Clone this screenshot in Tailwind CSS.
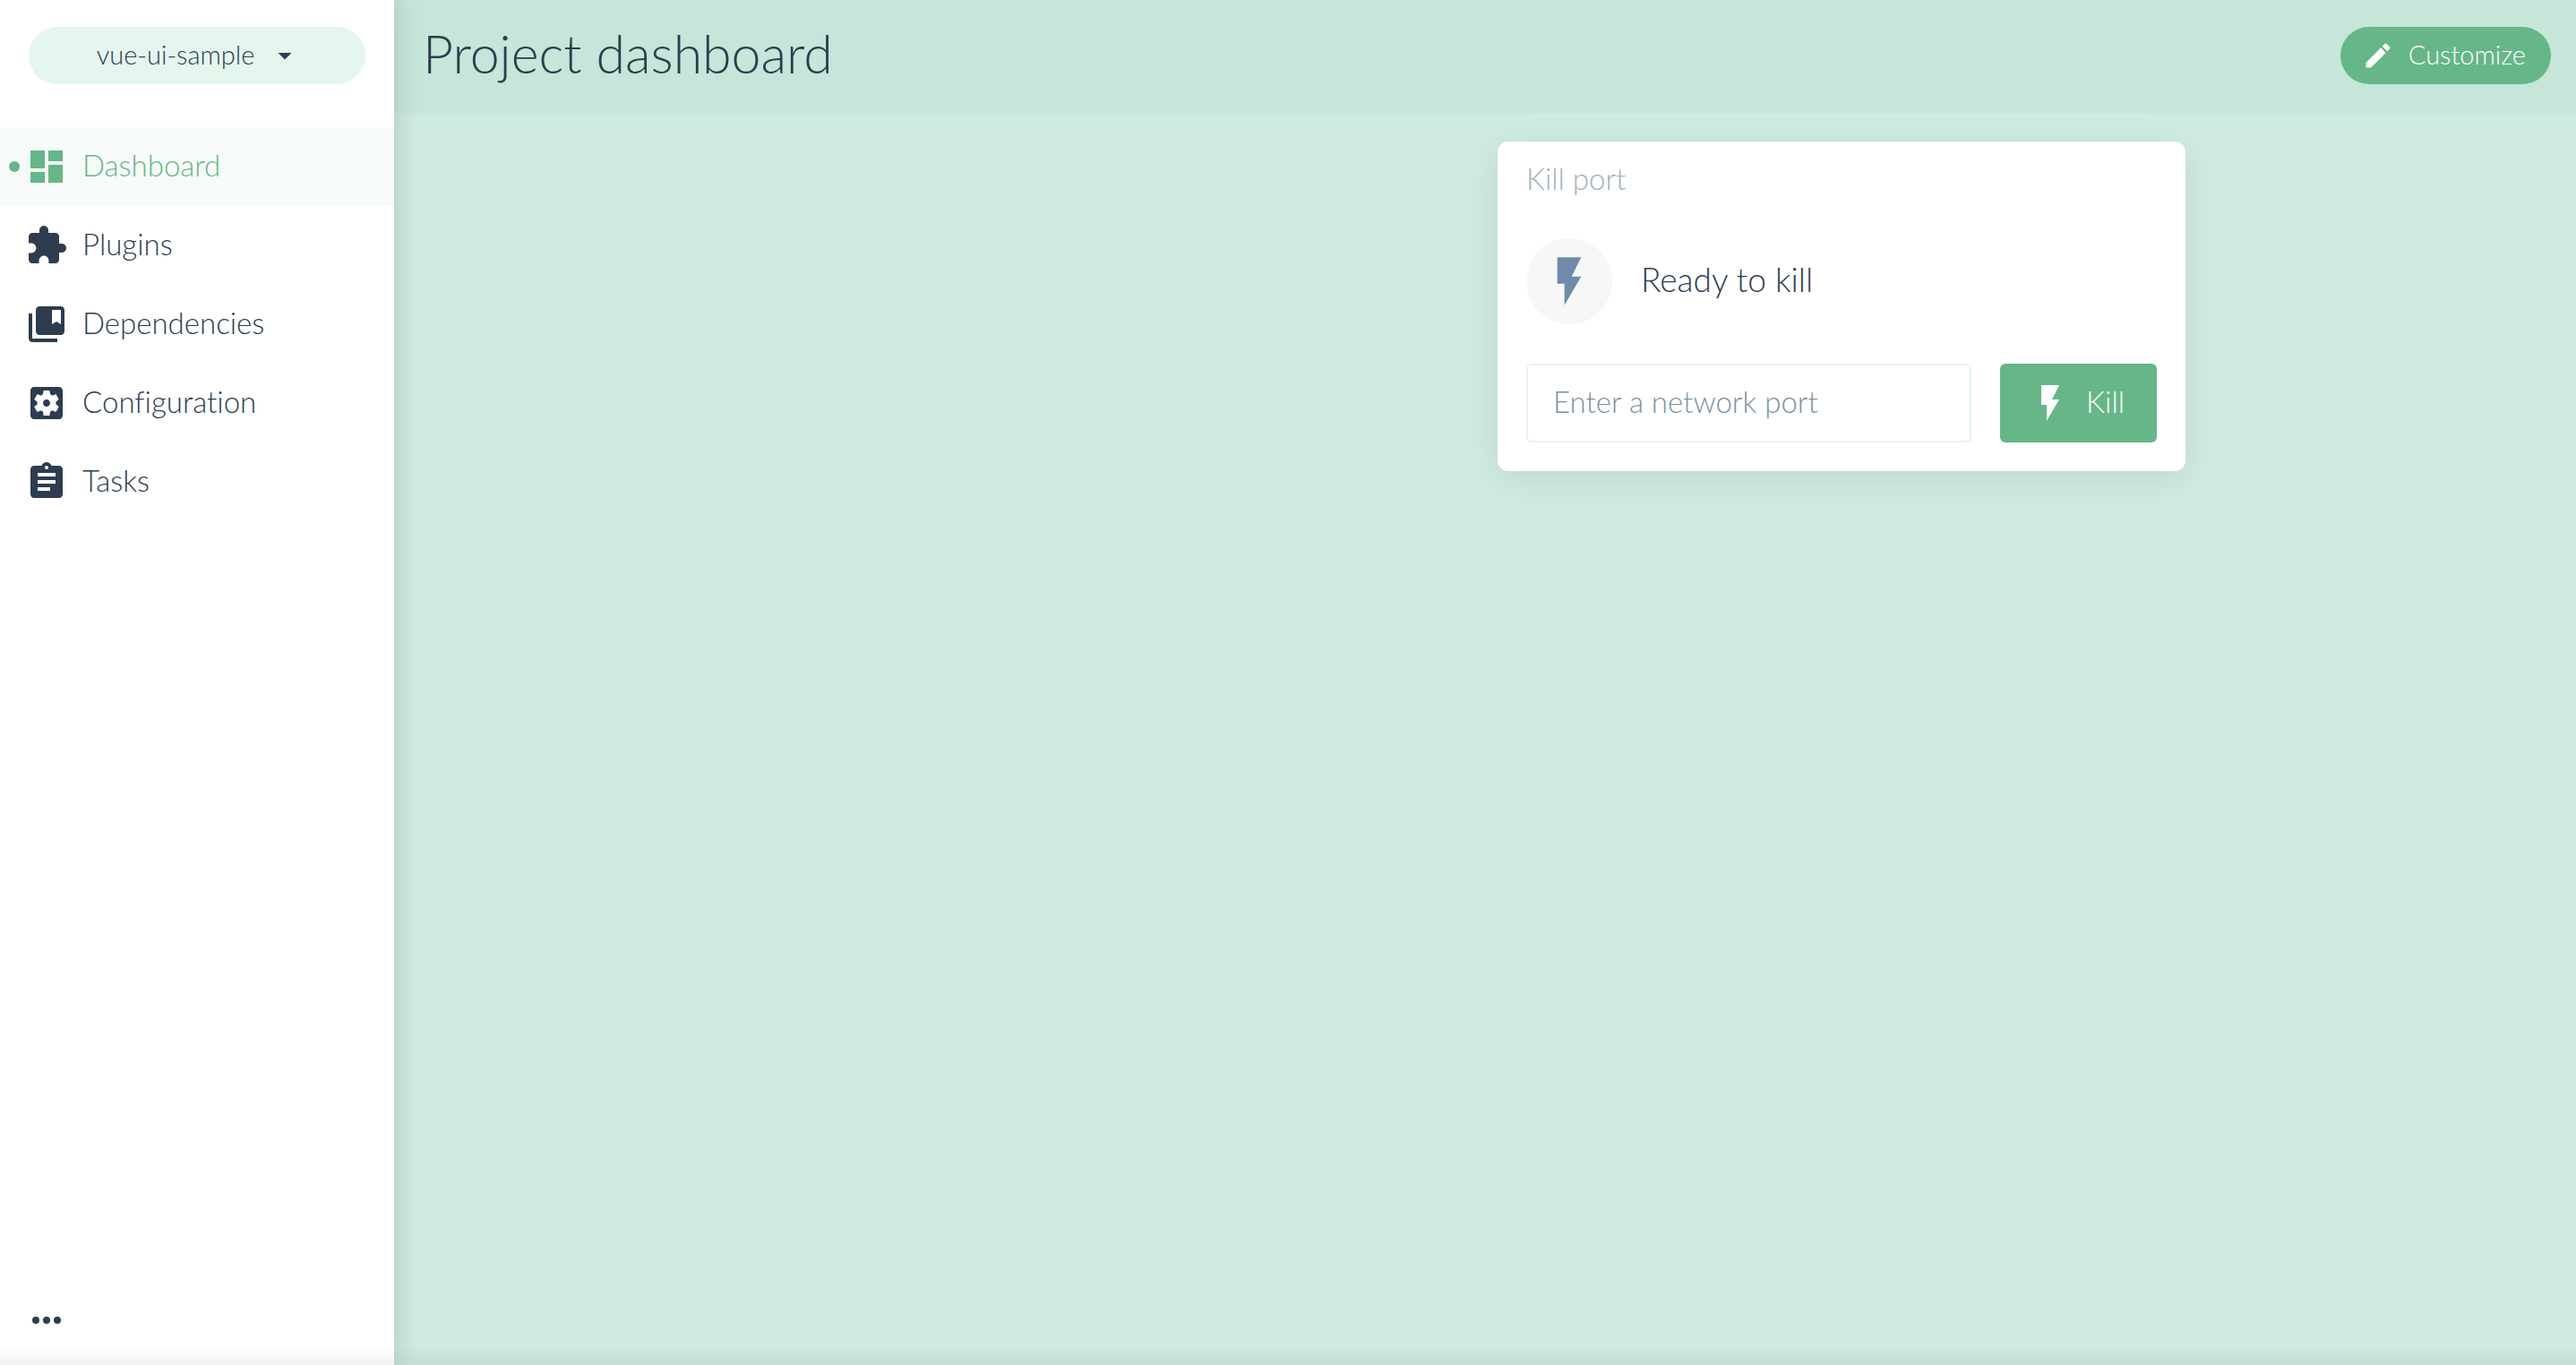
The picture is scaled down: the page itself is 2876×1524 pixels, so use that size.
<!DOCTYPE html>
<html lang="en">
<head>
<meta charset="utf-8">
<title>Project dashboard</title>
<script src="https://cdn.jsdelivr.net/npm/@tailwindcss/browser@4"></script>
</head>
<body class="flex min-h-screen bg-[#cfeadf] font-['Lato','Liberation_Sans',sans-serif] text-[33px] leading-10 font-light text-[#2e3c4f] [font-variant-ligatures:none]">

<aside class="relative z-10 flex w-[440px] shrink-0 flex-col bg-white shadow-[0_0_28px_rgba(0,0,0,0.16)]">
  <div class="px-8 pt-[30px] pb-12">
    <button type="button" class="flex h-16 w-full items-center justify-center gap-4 rounded-full bg-[#e4f6ee] pl-1 text-[29px]">
      <span class="pb-[2px]">vue-ui-sample</span>
      <svg class="size-9" viewBox="0 0 24 24" fill="currentColor" aria-hidden="true"><path d="M7 10l5 5 5-5z"/></svg>
    </button>
  </div>

  <nav class="flex flex-col">
    <a href="#dashboard" aria-current="page" class="relative flex h-[88px] items-center gap-4 bg-[#f6fbf9] px-7 text-[#66b688]">
      <span class="absolute left-[10px] size-3 rounded-full bg-[#66b688]"></span>
      <svg class="size-12" viewBox="0 0 24 24" fill="currentColor" aria-hidden="true"><path d="M3 13h8V3H3v10zm0 8h8v-6H3v6zm10 0h8V11h-8v10zm0-18v6h8V3h-8z"/></svg>
      <span class="pb-1">Dashboard</span>
    </a>
    <a href="#plugins" class="flex h-[88px] items-center gap-4 px-7">
      <svg class="size-12" viewBox="0 0 24 24" fill="currentColor" aria-hidden="true"><path d="M20.5 11H19V7c0-1.1-.9-2-2-2h-4V3.5C13 2.12 11.88 1 10.500 1S8 2.120 8 3.500V5H4c-1.100 0-1.990.9-1.990 2v3.800H3.500c1.490 0 2.700 1.210 2.700 2.700s-1.210 2.700-2.700 2.700H2V20c0 1.100.9 2 2 2h3.800v-1.500c0-1.490 1.210-2.700 2.700-2.700 1.490 0 2.700 1.210 2.700 2.700V22H17c1.100 0 2-.9 2-2v-4h1.500c1.380 0 2.500-1.120 2.500-2.500S21.880 11 20.500 11z"/></svg>
      <span class="pb-1">Plugins</span>
    </a>
    <a href="#dependencies" class="flex h-[88px] items-center gap-4 px-7">
      <svg class="size-12" viewBox="0 0 24 24" fill="currentColor" aria-hidden="true"><path d="M4 6H2v14c0 1.1.9 2 2 2h14v-2H4V6z"/><path d="M20 2H8c-1.1 0-2 .9-2 2v12c0 1.1.9 2 2 2h12c1.1 0 2-.9 2-2V4c0-1.100-.9-2-2-2zm0 10l-2.500-1.500L15 12V4h5v8z"/></svg>
      <span class="pb-1">Dependencies</span>
    </a>
    <a href="#configuration" class="flex h-[88px] items-center gap-4 px-7">
      <svg class="size-12" viewBox="0 0 24 24" fill="currentColor" aria-hidden="true"><path d="M12 10c-1.1 0-2 .9-2 2s.9 2 2 2 2-.9 2-2-.9-2-2-2zm7-7H5c-1.11 0-2 .9-2 2v14c0 1.1.89 2 2 2h14c1.11 0 2-.9 2-2V5c0-1.1-.89-2-2-2zm-1.75 9c0 .23-.02.46-.05.68l1.48 1.16c.13.11.17.3.08.45l-1.4 2.42c-.09.15-.27.21-.43.15l-1.74-.7c-.36.28-.76.51-1.18.69l-.26 1.85c-.03.17-.18.3-.35.3h-2.8c-.17 0-.32-.13-.35-.29l-.26-1.85c-.43-.18-.82-.41-1.18-.69l-1.74.7c-.16.06-.34 0-.43-.15l-1.4-2.42c-.09-.15-.05-.34.08-.45l1.48-1.16c-.03-.23-.05-.46-.05-.69 0-.23.02-.46.05-.68l-1.48-1.16c-.13-.11-.17-.3-.08-.45l1.4-2.42c.09-.15.27-.21.43-.15l1.74.7c.36-.28.76-.51 1.18-.69l.26-1.85c.03-.17.18-.3.35-.3h2.8c.17 0 .32.13.35.29l.26 1.85c.43.18.82.41 1.18.69l1.74-.7c.16-.06.34 0 .43.15l1.4 2.42c.09.15.05.34-.08.45l-1.48 1.16c.03.23.05.46.05.69z"/></svg>
      <span class="pb-1">Configuration</span>
    </a>
    <a href="#tasks" class="flex h-[88px] items-center gap-4 px-7">
      <svg class="size-12" viewBox="0 0 24 24" fill="currentColor" aria-hidden="true"><path d="M19 3h-4.180C14.400 1.840 13.300 1 12 1c-1.300 0-2.400.84-2.820 2H5c-1.100 0-2 .9-2 2v14c0 1.100.9 2 2 2h14c1.100 0 2-.9 2-2V5c0-1.100-.9-2-2-2zm-7 0c.55 0 1 .45 1 1s-.45 1-1 1-1-.45-1-1 .45-1 1-1zm2 14H7v-2h7v2zm3-4H7v-2h10v2zm0-4H7V7h10v2z"/></svg>
      <span class="pb-1">Tasks</span>
    </a>
  </nav>

  <div class="mt-auto px-7 pb-[26px]">
    <button type="button" aria-label="More" class="block">
      <svg class="size-12" viewBox="0 0 24 24" fill="currentColor" aria-hidden="true"><circle cx="6" cy="12" r="2"/><circle cx="12" cy="12" r="2"/><circle cx="18" cy="12" r="2"/></svg>
    </button>
  </div>
</aside>

<div class="flex min-w-0 flex-1 flex-col">
  <header class="flex h-[126px] items-start justify-between bg-[#c5e6d9] pt-[30px] pr-7 pl-8">
    <h1 class="text-[59px] leading-[60px]">Project dashboard</h1>
    <button type="button" class="flex h-16 items-center gap-4 rounded-full bg-[#66b688] pr-7 pl-6 text-[29px] text-white">
      <svg class="size-9" viewBox="0 0 24 24" fill="currentColor" aria-hidden="true"><path d="M3 17.25V21h3.75L17.81 9.94l-3.75-3.75L3 17.25zM20.71 7.04c.39-.39.39-1.02 0-1.41l-2.34-2.34c-.39-.39-1.02-.39-1.41 0l-1.83 1.83 3.75 3.750 1.830-1.830z"/></svg>
      <span class="pb-[2px]">Customize</span>
    </button>
  </header>

  <main class="grid grid-cols-2 gap-7 pt-8">
    <section class="col-start-2 flex w-full max-w-[768px] flex-col rounded-xl bg-white px-8 pb-8 shadow-[0_8px_40px_rgba(0,0,0,0.08)]">
      <h2 class="flex h-[84px] items-center pb-[2px] text-[#a2b1bb]">Kill port</h2>
      <div class="flex items-center gap-8 pt-6 pb-11">
        <span class="flex size-24 items-center justify-center rounded-full bg-[#f7f7f7] text-[#6f8aab]">
          <svg class="size-16" viewBox="0 0 24 24" fill="currentColor" aria-hidden="true"><path d="M7 2v11h3v9l7-12h-4l4-8z"/></svg>
        </span>
        <p class="pb-1 text-[37px]">Ready to kill</p>
      </div>
      <form class="flex gap-8">
        <input type="text" aria-label="Network port" placeholder="Enter a network port" class="h-[88px] min-w-0 flex-1 rounded-md border-2 border-[#e4f6ee] bg-white px-7 pb-1 placeholder:text-[#7893a5]">
        <button type="button" class="flex h-[88px] items-center gap-4 rounded-md bg-[#66b688] pr-9 pl-8 text-white">
          <svg class="size-12" viewBox="0 0 24 24" fill="currentColor" aria-hidden="true"><path d="M7 2v11h3v9l7-12h-4l4-8z"/></svg>
          <span class="pb-1">Kill</span>
        </button>
      </form>
    </section>
  </main>
</div>

<div class="pointer-events-none fixed inset-x-0 bottom-0 z-20 h-5 bg-linear-to-t from-black/5 to-transparent"></div>

</body>
</html>
